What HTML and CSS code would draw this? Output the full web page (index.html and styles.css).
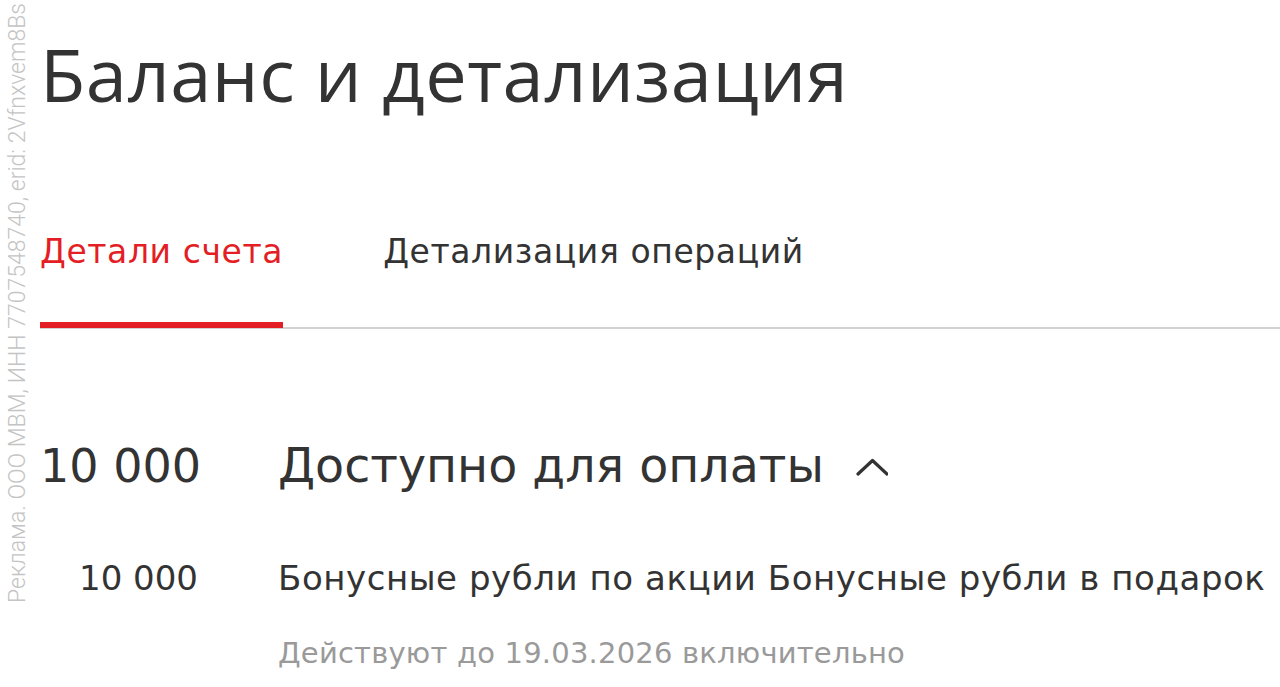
FILE: index.html
```html
<!DOCTYPE html>
<html lang="ru">
<head>
<meta charset="utf-8">
<title>Баланс и детализация</title>
<link rel="stylesheet" href="styles.css">
</head>
<body>
<div class="page">
  <aside class="ad">Реклама. ООО МВМ, ИНН 7707548740, erid: 2Vfnxvem8Bs</aside>
  <main class="main">
    <h1 class="title">Баланс и детализация</h1>
    <nav class="tabs">
      <span class="tab tab-active">Детали счета</span>
      <span class="tab">Детализация операций</span>
    </nav>
    <section class="balance">
      <div class="amount amount-main">10 000</div>
      <div class="label-main"><span>Доступно для оплаты</span>
        <svg class="chevron" width="32" height="18" viewBox="0 0 32 18"><path d="M2 16 L16.5 2.5 L31 16" fill="none" stroke="#333" stroke-width="3.2" stroke-linecap="round" stroke-linejoin="round"/></svg>
      </div>
      <div class="amount amount-sub">10 000</div>
      <div class="label-sub">Бонусные рубли по акции Бонусные рубли в подарок</div>
      <div class="note">Действуют до 19.03.2026 включительно</div>
    </section>
  </main>
</div>
</body>
</html>
```
FILE: styles.css
```css
html, body {
  margin: 0;
  padding: 0;
  background: #ffffff;
}
body {
  font-family: "DejaVu Sans", "Open Sans", sans-serif;
  color: #333333;
  overflow: hidden;
}
.page {
  display: flex;
  height: 687px;
}
.ad {
  flex: 0 0 36px;
  width: 36px;
  height: 687px;
  box-sizing: border-box;
  padding-top: 84px;
  writing-mode: vertical-rl;
  transform: rotate(180deg);
  font-family: Roboto, "Liberation Sans", sans-serif;
  font-weight: 300;
  font-size: 23px;
  line-height: 36px;
  color: #c4c4c4;
  white-space: nowrap;
}
.main {
  flex: 1;
  padding-left: 4px;
  padding-top: 30px;
  min-width: 0;
}
.title {
  margin: 0;
  font-family: "Open Sans", "Noto Sans", sans-serif;
  font-weight: 400;
  font-size: 74px;
  line-height: 88px;
  letter-spacing: 0.5px;
  color: #333333;
  white-space: nowrap;
}
.tabs {
  margin-top: 114px;
  display: flex;
  gap: 100px;
  border-bottom: 2px solid #d2d2d2;
}
.tab {
  font-size: 33px;
  line-height: 40px;
  letter-spacing: 0.6px;
  padding-bottom: 50px;
  margin-bottom: -1px;
  border-bottom: 6px solid transparent;
  color: #333333;
  white-space: nowrap;
}
.tab-active {
  color: #e31e24;
  border-bottom-color: #e31e24;
}
.balance {
  margin-top: 109px;
  display: grid;
  grid-template-columns: 158px 1fr;
  column-gap: 80px;
  align-items: baseline;
}
.amount {
  text-align: right;
  white-space: nowrap;
}
.amount-main {
  font-size: 46px;
  line-height: 56px;
}
.label-main {
  font-size: 47.5px;
  line-height: 56px;
  display: flex;
  align-items: center;
  gap: 32px;
  white-space: nowrap;
}
.chevron {
  display: block;
  margin-top: 2px;
}
.amount-sub,
.label-sub {
  font-size: 34px;
  line-height: 40px;
  margin-top: 64px;
  white-space: nowrap;
}
.label-sub {
  letter-spacing: 0.55px;
}
.note {
  grid-column: 2;
  margin-top: 37px;
  font-size: 29px;
  line-height: 36px;
  letter-spacing: 0.2px;
  color: #9a9a9a;
  white-space: nowrap;
}
```
